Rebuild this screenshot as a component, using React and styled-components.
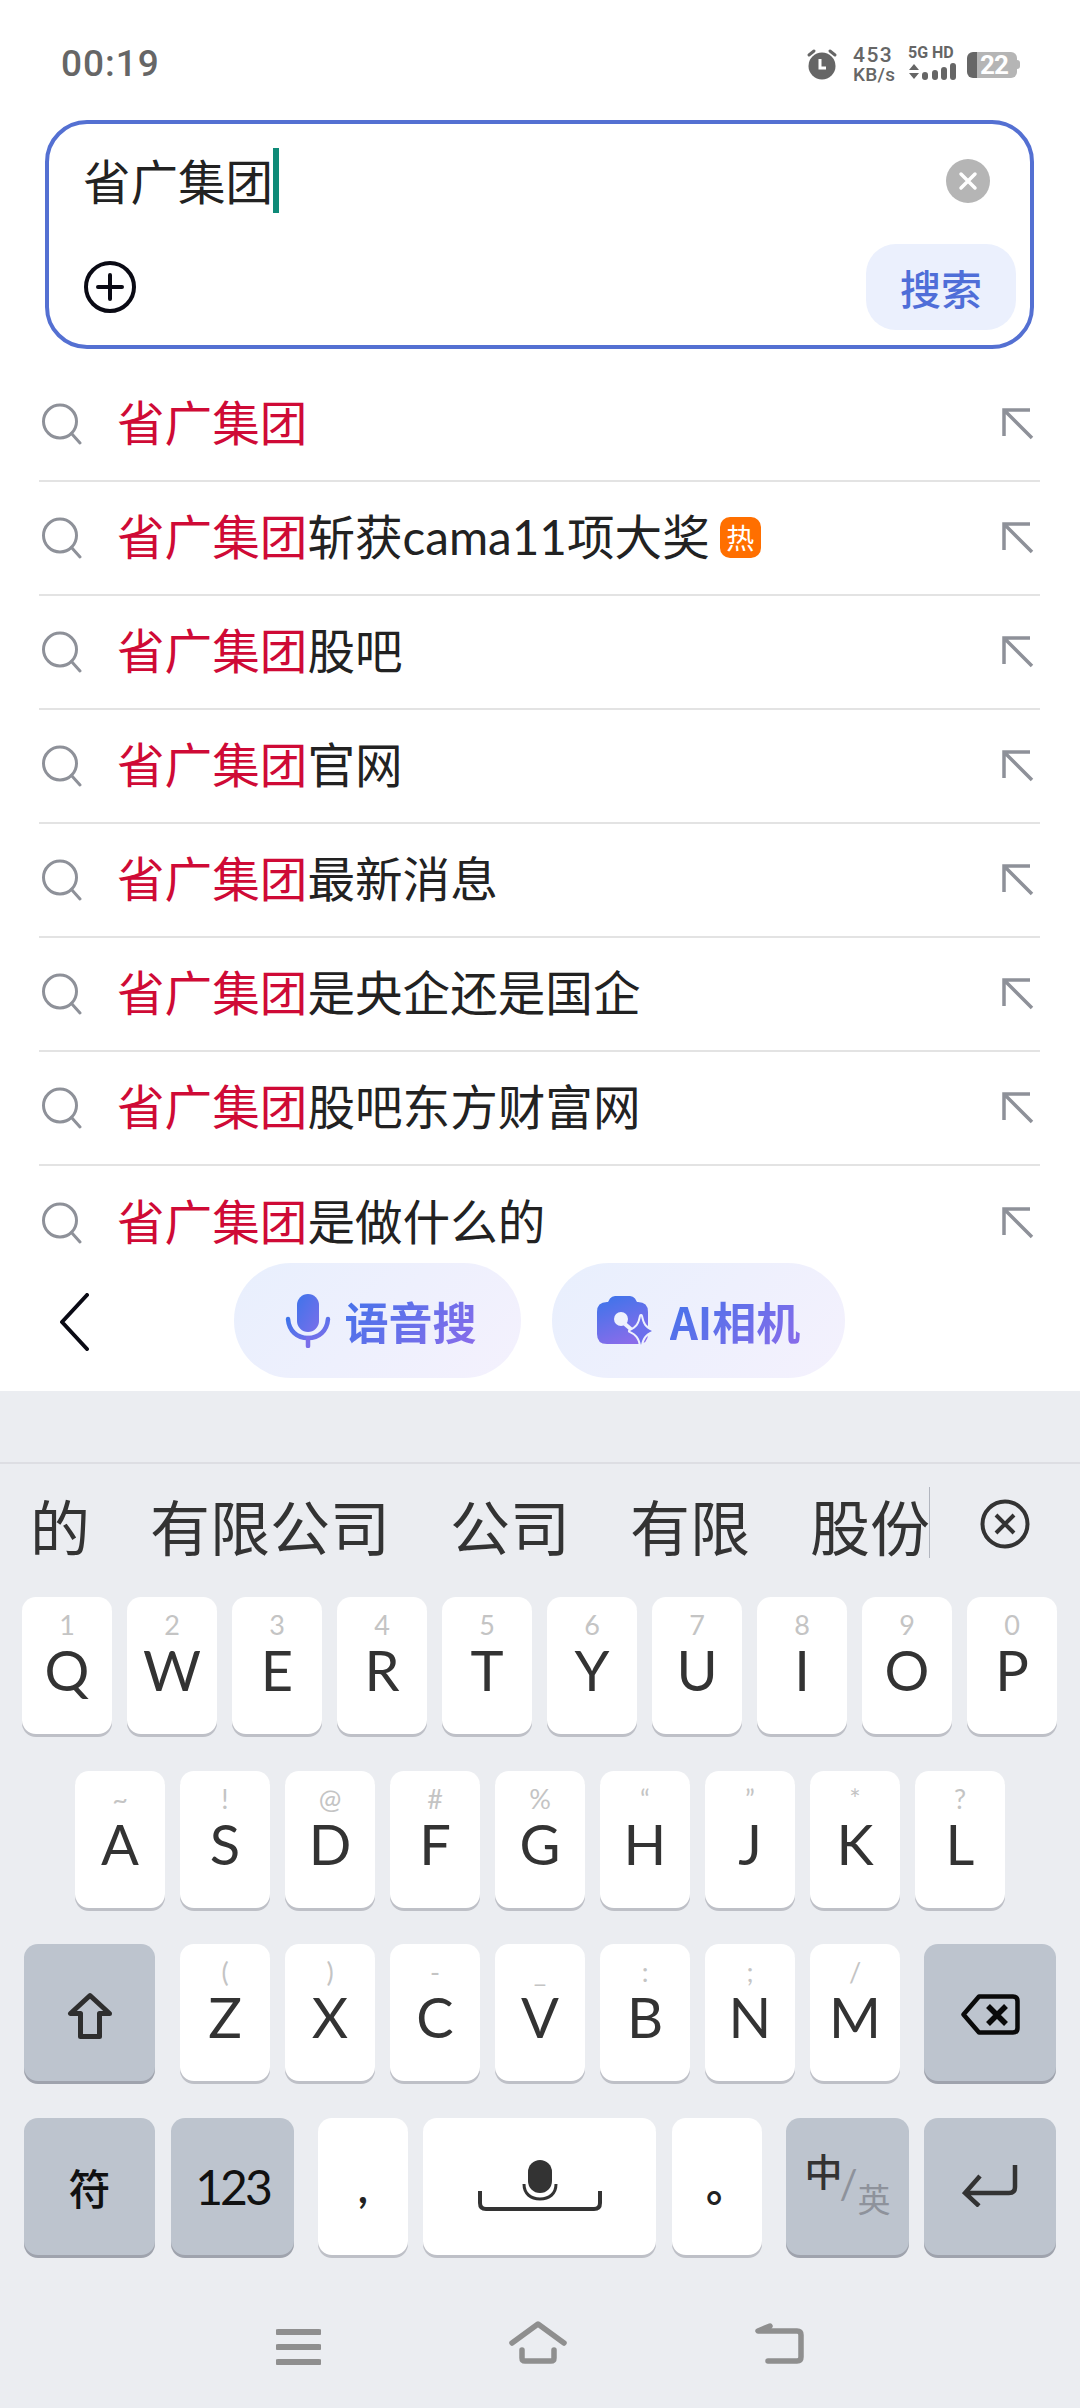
import React from 'react'
import styled, { createGlobalStyle } from 'styled-components'

const CJK = `'Noto Sans CJK SC', 'Noto Sans', sans-serif`
const LATIN = `Lato, 'Noto Sans CJK SC', sans-serif`

const suggestions = [
	{ tail: '' },
	{ tail: '斩获cama11项大奖', hot: true },
	{ tail: '股吧' },
	{ tail: '官网' },
	{ tail: '最新消息' },
	{ tail: '是央企还是国企' },
	{ tail: '股吧东方财富网' },
	{ tail: '是做什么的' },
]

const row1 = [['Q', '1'], ['W', '2'], ['E', '3'], ['R', '4'], ['T', '5'], ['Y', '6'], ['U', '7'], ['I', '8'], ['O', '9'], ['P', '0']]
const row2 = [['A', '~'], ['S', '!'], ['D', '@'], ['F', '#'], ['G', '%'], ['H', '“'], ['J', '”'], ['K', '*'], ['L', '?']]
const row3 = [['Z', '('], ['X', ')'], ['C', '-'], ['V', '_'], ['B', ':'], ['N', ';'], ['M', '/']]
const candidates = ['的', '有限公司', '公司', '有限', '股份']

const GlobalStyle = createGlobalStyle`
	html, body {
		margin: 0;
		padding: 0;
		background: #fff;
	}
	* {
		box-sizing: border-box;
	}
`

const Page = styled.div`
	width: 1080px;
	height: 2408px;
	overflow: hidden;
	display: flex;
	flex-direction: column;
	font-family: ${CJK};
	background: #fff;
`

const IconSvg = styled.svg`
	display: block;
	flex-shrink: 0;
	margin-top: ${(p) => p.$top || 0}px;
	margin-left: ${(p) => p.$left || 0}px;
`

const StatusBar = styled.div`
	height: 120px;
	padding: 45px 60px 0 61px;
	display: flex;
	justify-content: space-between;
	align-items: flex-start;
`

const Time = styled.div`
	font-family: Roboto, sans-serif;
	font-weight: 500;
	font-size: 37px;
	line-height: 38px;
	letter-spacing: 1px;
	color: #666;
`

const StatusIcons = styled.div`
	display: flex;
	align-items: flex-start;
	color: #666;
`

const Speed = styled.div`
	width: 42px;
	margin-left: 15px;
	font-family: Roboto, sans-serif;
	font-weight: 500;
	display: flex;
	flex-direction: column;
	align-items: flex-start;
	white-space: nowrap;
	span:first-child {
		font-size: 21px;
		line-height: 20px;
		letter-spacing: 1.5px;
	}
	span:last-child {
		font-size: 19px;
		line-height: 20px;
		letter-spacing: 0.3px;
	}
`

const Network = styled.div`
	width: 48px;
	margin-left: 13px;
	font-family: Roboto, sans-serif;
	font-weight: 700;
	font-size: 16px;
	line-height: 15px;
	white-space: nowrap;
`

const Battery = styled.div`
	margin: 7px 0 0 11px;
	width: 50px;
	height: 26px;
	border-radius: 6px;
	background: linear-gradient(90deg, #666 0 10px, #b5b5b5 10px);
	display: flex;
	align-items: center;
	padding-left: 13px;
	font-family: Roboto, sans-serif;
	font-weight: 700;
	font-size: 26px;
	letter-spacing: -1px;
	color: #fff;
`

const BatteryCap = styled.div`
	margin: 15px 0 0 0;
	width: 3px;
	height: 9px;
	border-radius: 0 3px 3px 0;
	background: #b5b5b5;
`

const SearchBox = styled.div`
	margin: 0 46px 0 45px;
	height: 229px;
	border: 4px solid #5470d2;
	border-radius: 42px;
	padding: 24px 14px 15px 35px;
	display: flex;
	flex-direction: column;
	justify-content: space-between;
`

const InputRow = styled.div`
	display: flex;
	align-items: center;
	justify-content: space-between;
	height: 65px;
	padding-right: 26px;
`

const InputText = styled.div`
	display: flex;
	align-items: center;
	font-size: 47.5px;
	line-height: 65px;
	color: #222;
`

const InputValue = styled.span`
	margin: 0 0 3px -1px;
`

const Caret = styled.span`
	width: 6px;
	height: 65px;
	background: #0f8a78;
`

const ActionRow = styled.div`
	display: flex;
	align-items: center;
	justify-content: space-between;
`

const SearchButton = styled.div`
	width: 150px;
	height: 86px;
	border-radius: 30px;
	background: #ebf0fd;
	color: #4f6ed8;
	font-size: 41px;
	font-weight: 500;
	display: flex;
	align-items: center;
	justify-content: center;
`

const List = styled.div`
	margin-top: 19px;
	height: 878px;
	overflow: hidden;
	padding: 0 40px 0 39px;
`

const Row = styled.div`
	height: 114px;
	flex-shrink: 0;
	display: flex;
	align-items: center;
	border-bottom: 2px solid #e3e3e3;
	&:last-child {
		border-bottom: none;
	}
`

const RowText = styled.div`
	margin-left: 34px;
	padding-bottom: 7px;
	font-family: ${LATIN};
	font-size: 47.6px;
	color: #222;
	white-space: nowrap;
`

const Match = styled.span`
	color: #cf0a36;
`

const HotBadge = styled.span`
	width: 41px;
	height: 41px;
	margin: 0 0 2px 10px;
	border-radius: 10px;
	background: #ff6f00;
	color: #fff;
	font-size: 28px;
	display: flex;
	align-items: center;
	justify-content: center;
`

const Arrow = styled.div`
	margin-left: auto;
	margin-right: 6px;
	display: flex;
`

const ActionBar = styled.div`
	height: 145px;
	padding: 17px 0 0 58px;
	display: flex;
	align-items: flex-start;
`

const BackButton = styled.div`
	margin: 30px 144px 0 0;
	display: flex;
`

const Pill = styled.div`
	width: ${(p) => p.$w}px;
	height: 115px;
	margin-right: 31px;
	padding-left: ${(p) => p.$pad || 0}px;
	border-radius: 57px;
	background: linear-gradient(135deg, #e8effd, #f4f1fd);
	display: flex;
	align-items: center;
	justify-content: center;
	gap: ${(p) => p.$gap}px;
`

const PillText = styled.span`
	font-size: 44px;
	font-weight: 700;
	background: linear-gradient(135deg, #4173ea, #8c6cea);
	-webkit-background-clip: text;
	background-clip: text;
	color: transparent;
`

const Keyboard = styled.div`
	flex: 1;
	background: #ebedf1;
	display: flex;
	flex-direction: column;
	padding-top: 71px;
`

const CandidateBar = styled.div`
	height: 135px;
	border-top: 2px solid #dddee3;
	padding: 23px 0 0 30px;
	display: flex;
	align-items: flex-start;
`

const Candidates = styled.div`
	width: 900px;
	height: 71px;
	display: flex;
	gap: 60px;
	border-right: 1px solid #b2b6bf;
	font-size: 60px;
	line-height: 76px;
	color: #333;
	white-space: nowrap;
`

const CandidateClose = styled.div`
	margin: 12px 0 0 50px;
	display: flex;
`

const Keys = styled.div`
	display: flex;
	flex-direction: column;
	gap: 36.5px;
`

const KeyRow = styled.div`
	display: flex;
	gap: 15px;
	padding-left: ${(p) => p.$left}px;
`

const Key = styled.div`
	width: ${(p) => p.$w || 90}px;
	height: 137px;
	margin-left: ${(p) => p.$ml || 0}px;
	border-radius: 14px;
	background: ${(p) => (p.$fn ? '#bdc4ce' : '#fff')};
	box-shadow: 0 3px 0 ${(p) => (p.$fn ? '#9fa3ad' : '#bec0c7')};
	color: #333;
	display: flex;
	flex-direction: column;
	align-items: center;
	justify-content: ${(p) => (p.$center ? 'center' : 'flex-start')};
`

const Hint = styled.span`
	margin-top: 15px;
	height: 26px;
	font-family: Lato, sans-serif;
	font-size: 27px;
	line-height: 26px;
	color: #c4c4c4;
`

const Letter = styled.span`
	margin-top: 3px;
	font-family: ${LATIN};
	font-size: 56px;
	line-height: 58px;
	color: #333;
`

const KeyLabel = styled.span`
	font-family: ${(p) => (p.$latin ? LATIN : CJK)};
	font-size: ${(p) => p.$size}px;
	font-weight: ${(p) => (p.$latin ? 400 : 500)};
	letter-spacing: ${(p) => (p.$latin ? '-3px' : '0')};
	color: #111;
`

const Punct = styled.span`
	font-size: 42px;
	line-height: 42px;
	font-weight: 700;
	color: #222;
	font-family: ${LATIN};
	margin-top: ${(p) => p.$top || 0}px;
	margin-left: ${(p) => p.$left || 0}px;
`

const Toggle = styled.div`
	display: flex;
	align-items: flex-start;
	margin-top: -6px;
`

const ToggleMain = styled.span`
	font-size: 38px;
	line-height: 40px;
	font-weight: 500;
	color: #333;
`

const ToggleSlash = styled.span`
	margin: 14px 0 0 -3px;
	font-family: Lato, sans-serif;
	font-size: 40px;
	line-height: 40px;
	color: #8e929b;
`

const ToggleSub = styled.span`
	margin: 30px 0 0 0;
	font-size: 33px;
	line-height: 36px;
	color: #8e929b;
`

const NavBar = styled.div`
	margin-top: 65px;
	display: flex;
	justify-content: center;
	align-items: flex-end;
	gap: 186.5px;
`

const AlarmIcon = () => (
	<IconSvg $top={3} width='32' height='32' viewBox='0 0 32 32'>
		<circle cx='16' cy='18' r='13.5' fill='#666' />
		<path d='M3 7l5-4M29 7l-5-4' stroke='#666' strokeWidth='3' strokeLinecap='round' />
		<path d='M14 11v9h6' stroke='#fff' strokeWidth='3' fill='none' />
	</IconSvg>
)

const SignalIcon = () => (
	<IconSvg $top={3} width='48' height='18' viewBox='0 0 48 18'>
		<path d='M1 7l5-6 5 6zM1 10h10l-5 6z' fill='#666' />
		<rect x='14' y='9' width='6' height='8' rx='3' fill='#666' />
		<rect x='24' y='7' width='6' height='10' rx='3' fill='#666' />
		<rect x='33' y='4' width='6' height='13' rx='3' fill='#666' />
		<rect x='42' y='0' width='6' height='17' rx='3' fill='#666' />
	</IconSvg>
)

const ClearIcon = () => (
	<IconSvg width='44' height='44' viewBox='0 0 44 44'>
		<circle cx='22' cy='22' r='22' fill='#b5b5b5' />
		<path d='M15 15l14 14M29 15L15 29' stroke='#fff' strokeWidth='3.5' strokeLinecap='round' />
	</IconSvg>
)

const PlusIcon = () => (
	<IconSvg width='52' height='52' viewBox='0 0 52 52'>
		<circle cx='26' cy='26' r='24' fill='none' stroke='#0a0a14' strokeWidth='4' />
		<path d='M26 14v24M14 26h24' stroke='#0a0a14' strokeWidth='4' strokeLinecap='round' />
	</IconSvg>
)

const SearchIcon = () => (
	<IconSvg $left={2} width='42' height='42' viewBox='0 0 42 42'>
		<circle cx='19' cy='18.5' r='16.5' fill='none' stroke='#8e9199' strokeWidth='3' />
		<path d='M30.5 30.5L39 40' stroke='#8e9199' strokeWidth='3' strokeLinecap='round' />
	</IconSvg>
)

const FillIcon = () => (
	<IconSvg width='32' height='32' viewBox='0 0 32 32'>
		<path d='M2 28V2h26M2 2l28 28' fill='none' stroke='#8e9199' strokeWidth='3.5' />
	</IconSvg>
)

const ChevronIcon = () => (
	<IconSvg width='32' height='58' viewBox='0 0 32 58'>
		<path d='M29 2L4 29l25 27' fill='none' stroke='#0a0a14' strokeWidth='4' strokeLinecap='round' strokeLinejoin='round' />
	</IconSvg>
)

const MicPillIcon = () => (
	<IconSvg width='46' height='54' viewBox='0 0 46 54'>
		<defs>
			<linearGradient id='micG' x1='0' y1='0' x2='1' y2='1'>
				<stop offset='0' stopColor='#3f74ea' />
				<stop offset='1' stopColor='#7a6eea' />
			</linearGradient>
		</defs>
		<rect x='12' y='0' width='22' height='38' rx='11' fill='url(#micG)' />
		<path d='M3 25c1 12 9 19 20 19s19-7 20-19' fill='none' stroke='url(#micG)' strokeWidth='4.5' strokeLinecap='round' />
		<path d='M23 44v8' stroke='#7a6eea' strokeWidth='4.5' strokeLinecap='round' />
	</IconSvg>
)

const CameraIcon = () => (
	<IconSvg width='56' height='50' viewBox='0 0 56 50'>
		<defs>
			<linearGradient id='camG' x1='0.2' y1='0' x2='0.6' y2='1'>
				<stop offset='0' stopColor='#3f74ea' />
				<stop offset='1' stopColor='#8a6cea' />
			</linearGradient>
		</defs>
		<path d='M11 6l2-3.500Q15 0 18 0H33Q36 0 38 2.500L40 6h1Q51 6 51 16V38Q51 48 41 48H10Q0 48 0 38V16Q0 6 10 6z' fill='url(#camG)' />
		<circle cx='24' cy='23' r='7' fill='#eef1fd' />
		<path d='M28 28l8 7' stroke='#eef1fd' strokeWidth='4' />
		<path d='M44 20c1.500 8 4 12 11 15-7 3-9.500 7-11 14-1.500-7-4-11-11-14 7-3 9.500-7 11-15z' fill='#6c6fec' stroke='#eef1fd' strokeWidth='4' paintOrder='stroke' strokeLinejoin='round' />
	</IconSvg>
)

const CandidateCloseIcon = () => (
	<IconSvg width='50' height='50' viewBox='0 0 50 50'>
		<circle cx='25' cy='25' r='22.5' fill='none' stroke='#333' strokeWidth='4' />
		<path d='M16 16l18 18M34 16L16 34' stroke='#333' strokeWidth='4' />
	</IconSvg>
)

const ShiftIcon = () => (
	<IconSvg $top={6} width='46' height='47' viewBox='0 0 46 47'>
		<path d='M23 3.500L3.500 21.500H13.500V44.500H32.500V21.500H42.500Z' fill='none' stroke='#2e2e2e' strokeWidth='5' strokeLinejoin='round' />
	</IconSvg>
)

const DeleteIcon = () => (
	<IconSvg $top={4} width='59' height='41' viewBox='0 0 59 41'>
		<path d='M2.500 20.500L18 2.500H52Q56.500 2.500 56.500 7V34Q56.500 38.500 52 38.500H18Z' fill='none' stroke='#0a0a0a' strokeWidth='4.500' strokeLinejoin='round' />
		<path d='M27 12l18 18M45 12L27 30' stroke='#0a0a0a' strokeWidth='5.500' />
	</IconSvg>
)

const SpaceIcon = () => (
	<IconSvg width='124' height='52' viewBox='0 0 124 52'>
		<rect x='50' y='0' width='24' height='33' rx='12' fill='#333' />
		<path d='M46 24c0 10 7 15 16 15s16-5 16-15' fill='none' stroke='#333' strokeWidth='3' />
		<path d='M2 31v12c0 4 2 6 6 6h108c4 0 6-2 6-6V31' fill='none' stroke='#333' strokeWidth='4' />
	</IconSvg>
)

const EnterIcon = () => (
	<IconSvg width='56' height='42' viewBox='0 0 56 42'>
		<path d='M53 0v22c0 4-2 6-6 6H4M18 11L3 28l14 13' fill='none' stroke='#333' strokeWidth='4.500' />
	</IconSvg>
)

const MenuIcon = () => (
	<IconSvg width='45' height='36' viewBox='0 0 45 36'>
		<path d='M2 3h41M2 18h41M2 33h41' stroke='#8f8f8f' strokeWidth='6' strokeLinecap='round' />
	</IconSvg>
)

const HomeIcon = () => (
	<IconSvg width='60' height='45' viewBox='0 0 60 45'>
		<path d='M4 23L30 4l26 19' fill='none' stroke='#8f8f8f' strokeWidth='5.500' strokeLinecap='round' strokeLinejoin='round' />
		<path d='M14 30V38Q14 41 17 41H43Q46 41 46 38V30' fill='none' stroke='#8f8f8f' strokeWidth='5.500' strokeLinecap='round' />
	</IconSvg>
)

const ReturnIcon = () => (
	<IconSvg width='50' height='44' viewBox='0 0 50 44'>
		<path d='M16 5L4 10H43Q47 10 47 14V36Q47 40 43 40H14' fill='none' stroke='#8f8f8f' strokeWidth='5.500' strokeLinecap='round' strokeLinejoin='round' />
	</IconSvg>
)

const App = () => {
	return (
		<Page>
			<GlobalStyle />
			<StatusBar>
				<Time>00:19</Time>
				<StatusIcons>
					<AlarmIcon />
					<Speed>
						<span>453</span>
						<span>KB/s</span>
					</Speed>
					<Network>
						5G HD
						<SignalIcon />
					</Network>
					<Battery>22</Battery>
					<BatteryCap />
				</StatusIcons>
			</StatusBar>

			<SearchBox>
				<InputRow>
					<InputText>
						<InputValue>省广集团</InputValue>
						<Caret />
					</InputText>
					<ClearIcon />
				</InputRow>
				<ActionRow>
					<PlusIcon />
					<SearchButton>搜索</SearchButton>
				</ActionRow>
			</SearchBox>

			<List>
				{suggestions.map((item, index) => (
					<Row key={index}>
						<SearchIcon />
						<RowText>
							<Match>省广集团</Match>
							{item.tail}
						</RowText>
						{item.hot && <HotBadge>热</HotBadge>}
						<Arrow>
							<FillIcon />
						</Arrow>
					</Row>
				))}
			</List>

			<ActionBar>
				<BackButton>
					<ChevronIcon />
				</BackButton>
				<Pill $w={287} $gap={14} $pad={6}>
					<MicPillIcon />
					<PillText>语音搜</PillText>
				</Pill>
				<Pill $w={293} $gap={17}>
					<CameraIcon />
					<PillText>AI相机</PillText>
				</Pill>
			</ActionBar>

			<Keyboard>
				<CandidateBar>
					<Candidates>
						{candidates.map((word) => (
							<span key={word}>{word}</span>
						))}
					</Candidates>
					<CandidateClose>
						<CandidateCloseIcon />
					</CandidateClose>
				</CandidateBar>

				<Keys>
					<KeyRow $left={22}>
						{row1.map(([letter, hint]) => (
							<Key key={letter}>
								<Hint>{hint}</Hint>
								<Letter>{letter}</Letter>
							</Key>
						))}
					</KeyRow>
					<KeyRow $left={75}>
						{row2.map(([letter, hint]) => (
							<Key key={letter}>
								<Hint>{hint}</Hint>
								<Letter>{letter}</Letter>
							</Key>
						))}
					</KeyRow>
					<KeyRow $left={24}>
						<Key $fn $center $w={131}>
							<ShiftIcon />
						</Key>
						{row3.map(([letter, hint], index) => (
							<Key key={letter} $ml={index === 0 ? 10 : 0}>
								<Hint>{hint}</Hint>
								<Letter>{letter}</Letter>
							</Key>
						))}
						<Key $fn $center $w={132} $ml={9}>
							<DeleteIcon />
						</Key>
					</KeyRow>
					<KeyRow $left={24}>
						<Key $fn $center $w={131}>
							<KeyLabel $size={42}>符</KeyLabel>
						</Key>
						<Key $fn $center $w={123} $ml={1}>
							<KeyLabel $latin $size={48}>123</KeyLabel>
						</Key>
						<Key $center $ml={9}>
							<Punct $top={1}>,</Punct>
						</Key>
						<Key $center $w={233}>
							<SpaceIcon />
						</Key>
						<Key $center $ml={1}>
							<Punct $top={-2} $left={20}>。</Punct>
						</Key>
						<Key $fn $center $w={123} $ml={9}>
							<Toggle>
								<ToggleMain>中</ToggleMain>
								<ToggleSlash>/</ToggleSlash>
								<ToggleSub>英</ToggleSub>
							</Toggle>
						</Key>
						<Key $fn $center $w={132}>
							<EnterIcon />
						</Key>
					</KeyRow>
				</Keys>

				<NavBar>
					<MenuIcon />
					<HomeIcon />
					<ReturnIcon />
				</NavBar>
			</Keyboard>
		</Page>
	)
}

export default App
